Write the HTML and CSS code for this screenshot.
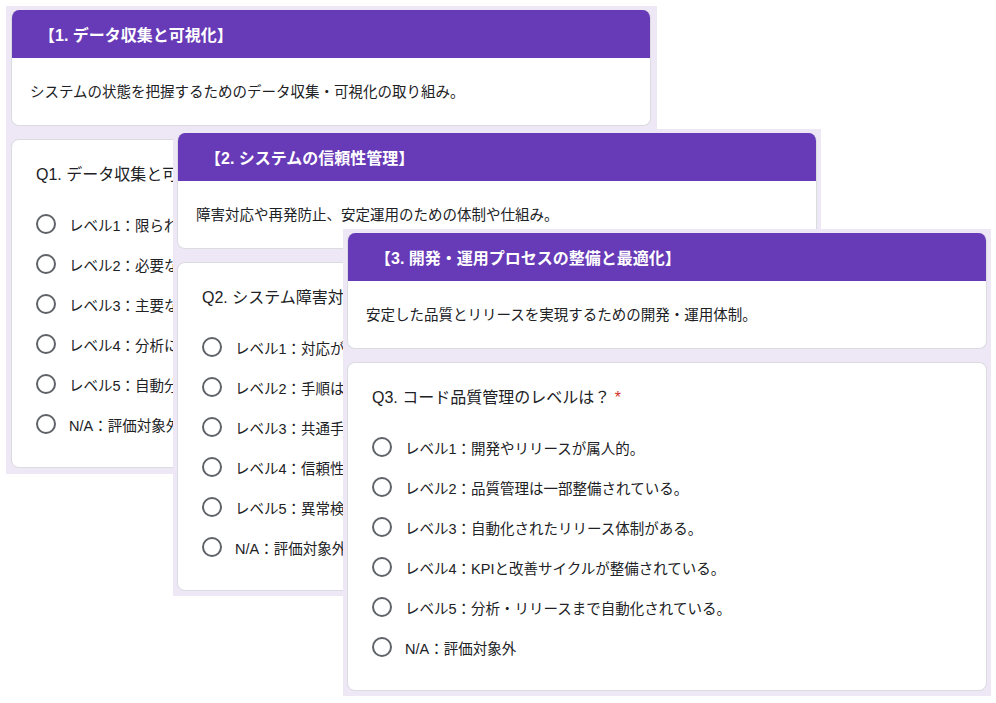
FILE: index.html
```html
<!DOCTYPE html>
<html lang="ja">
<head>
<meta charset="utf-8">
<title>Forms</title>
<link rel="stylesheet" href="styles.css">
</head>
<body>
<div class="desk">
  <section class="panel p1">
    <div class="card head-card">
      <div class="head">【1. データ収集と可視化】</div>
      <div class="desc">システムの状態を把握するためのデータ収集・可視化の取り組み。</div>
    </div>
    <div class="card q-card">
      <div class="q-title">Q1. データ収集と可視化のレベルは？ <span class="req">*</span></div>
      <ul class="opts">
        <li><span class="radio"></span>レベル1：限られたデータのみ手動で収集している。</li>
        <li><span class="radio"></span>レベル2：必要なデータは収集されている。</li>
        <li><span class="radio"></span>レベル3：主要な指標が可視化されている。</li>
        <li><span class="radio"></span>レベル4：分析に基づき改善している。</li>
        <li><span class="radio"></span>レベル5：自動分析まで整備されている。</li>
        <li><span class="radio"></span>N/A：評価対象外</li>
      </ul>
    </div>
  </section>

  <section class="panel p2">
    <div class="card head-card">
      <div class="head">【2. システムの信頼性管理】</div>
      <div class="desc">障害対応や再発防止、安定運用のための体制や仕組み。</div>
    </div>
    <div class="card q-card">
      <div class="q-title">Q2. システム障害対応のレベルは？ <span class="req">*</span></div>
      <ul class="opts">
        <li><span class="radio"></span>レベル1：対応が属人的。</li>
        <li><span class="radio"></span>レベル2：手順は一部整備されている。</li>
        <li><span class="radio"></span>レベル3：共通手順で対応している。</li>
        <li><span class="radio"></span>レベル4：信頼性指標で管理している。</li>
        <li><span class="radio"></span>レベル5：異常検知まで自動化されている。</li>
        <li><span class="radio"></span>N/A：評価対象外</li>
      </ul>
    </div>
  </section>

  <section class="panel p3">
    <div class="card head-card">
      <div class="head">【3. 開発・運用プロセスの整備と最適化】</div>
      <div class="desc">安定した品質とリリースを実現するための開発・運用体制。</div>
    </div>
    <div class="card q-card">
      <div class="q-title">Q3. コード品質管理のレベルは？ <span class="req">*</span></div>
      <ul class="opts">
        <li><span class="radio"></span>レベル1：開発やリリースが属人的。</li>
        <li><span class="radio"></span>レベル2：品質管理は一部整備されている。</li>
        <li><span class="radio"></span>レベル3：自動化されたリリース体制がある。</li>
        <li><span class="radio"></span>レベル4：KPIと改善サイクルが整備されている。</li>
        <li><span class="radio"></span>レベル5：分析・リリースまで自動化されている。</li>
        <li><span class="radio"></span>N/A：評価対象外</li>
      </ul>
    </div>
  </section>
</div>
</body>
</html>
```

FILE: styles.css
```css
* { box-sizing: border-box; }
html, body {
  margin: 0;
  padding: 0;
  background: #ffffff;
}
body {
  font-family: "Liberation Sans", "Noto Sans CJK JP", sans-serif;
  color: #202124;
}
.desk {
  position: relative;
  width: 996px;
  height: 703px;
  overflow: hidden;
}
.panel {
  position: absolute;
  background: #ede7f6;
  padding: 4px 4px 5px 4px;
  display: flex;
  flex-direction: column;
  gap: 13px;
}
.p1 { left: 6px; top: 6px; padding: 4px 6px 6px 5px; }
.p2 { left: 173px; top: 129px; }
.p3 { left: 343px; top: 229px; }

.card {
  width: 640px;
  background: #ffffff;
  border: 1px solid #dadce0;
  border-radius: 8px;
}
.head-card {
  overflow: hidden;
  height: 116px;
  display: flex;
  flex-direction: column;
  border-top: none;
}
.head {
  height: 48px;
  background: #673ab7;
  color: #ffffff;
  font-weight: bold;
  font-size: 16px;
  display: flex;
  align-items: center;
  padding-left: 28px;
  margin: 0 -1px;
  white-space: nowrap;
}
.desc {
  flex: 1;
  display: flex;
  align-items: center;
  padding: 0 0 3px 18px;
  font-size: 14.5px;
  white-space: nowrap;
}
.q-card {
  height: 329px;
  padding: 23px 24px 0 24px;
}
.q-title {
  font-size: 16px;
  line-height: 24px;
  white-space: nowrap;
}
.req { color: #d93025; }
.opts {
  list-style: none;
  margin: 17px 0 0 0;
  padding: 0;
  display: flex;
  flex-direction: column;
}
.opts li {
  height: 40px;
  display: flex;
  align-items: center;
  font-size: 14.5px;
  white-space: nowrap;
}
.radio {
  width: 20px;
  height: 20px;
  border: 2px solid #5f6368;
  border-radius: 50%;
  margin-right: 13px;
  flex: none;
}
```
